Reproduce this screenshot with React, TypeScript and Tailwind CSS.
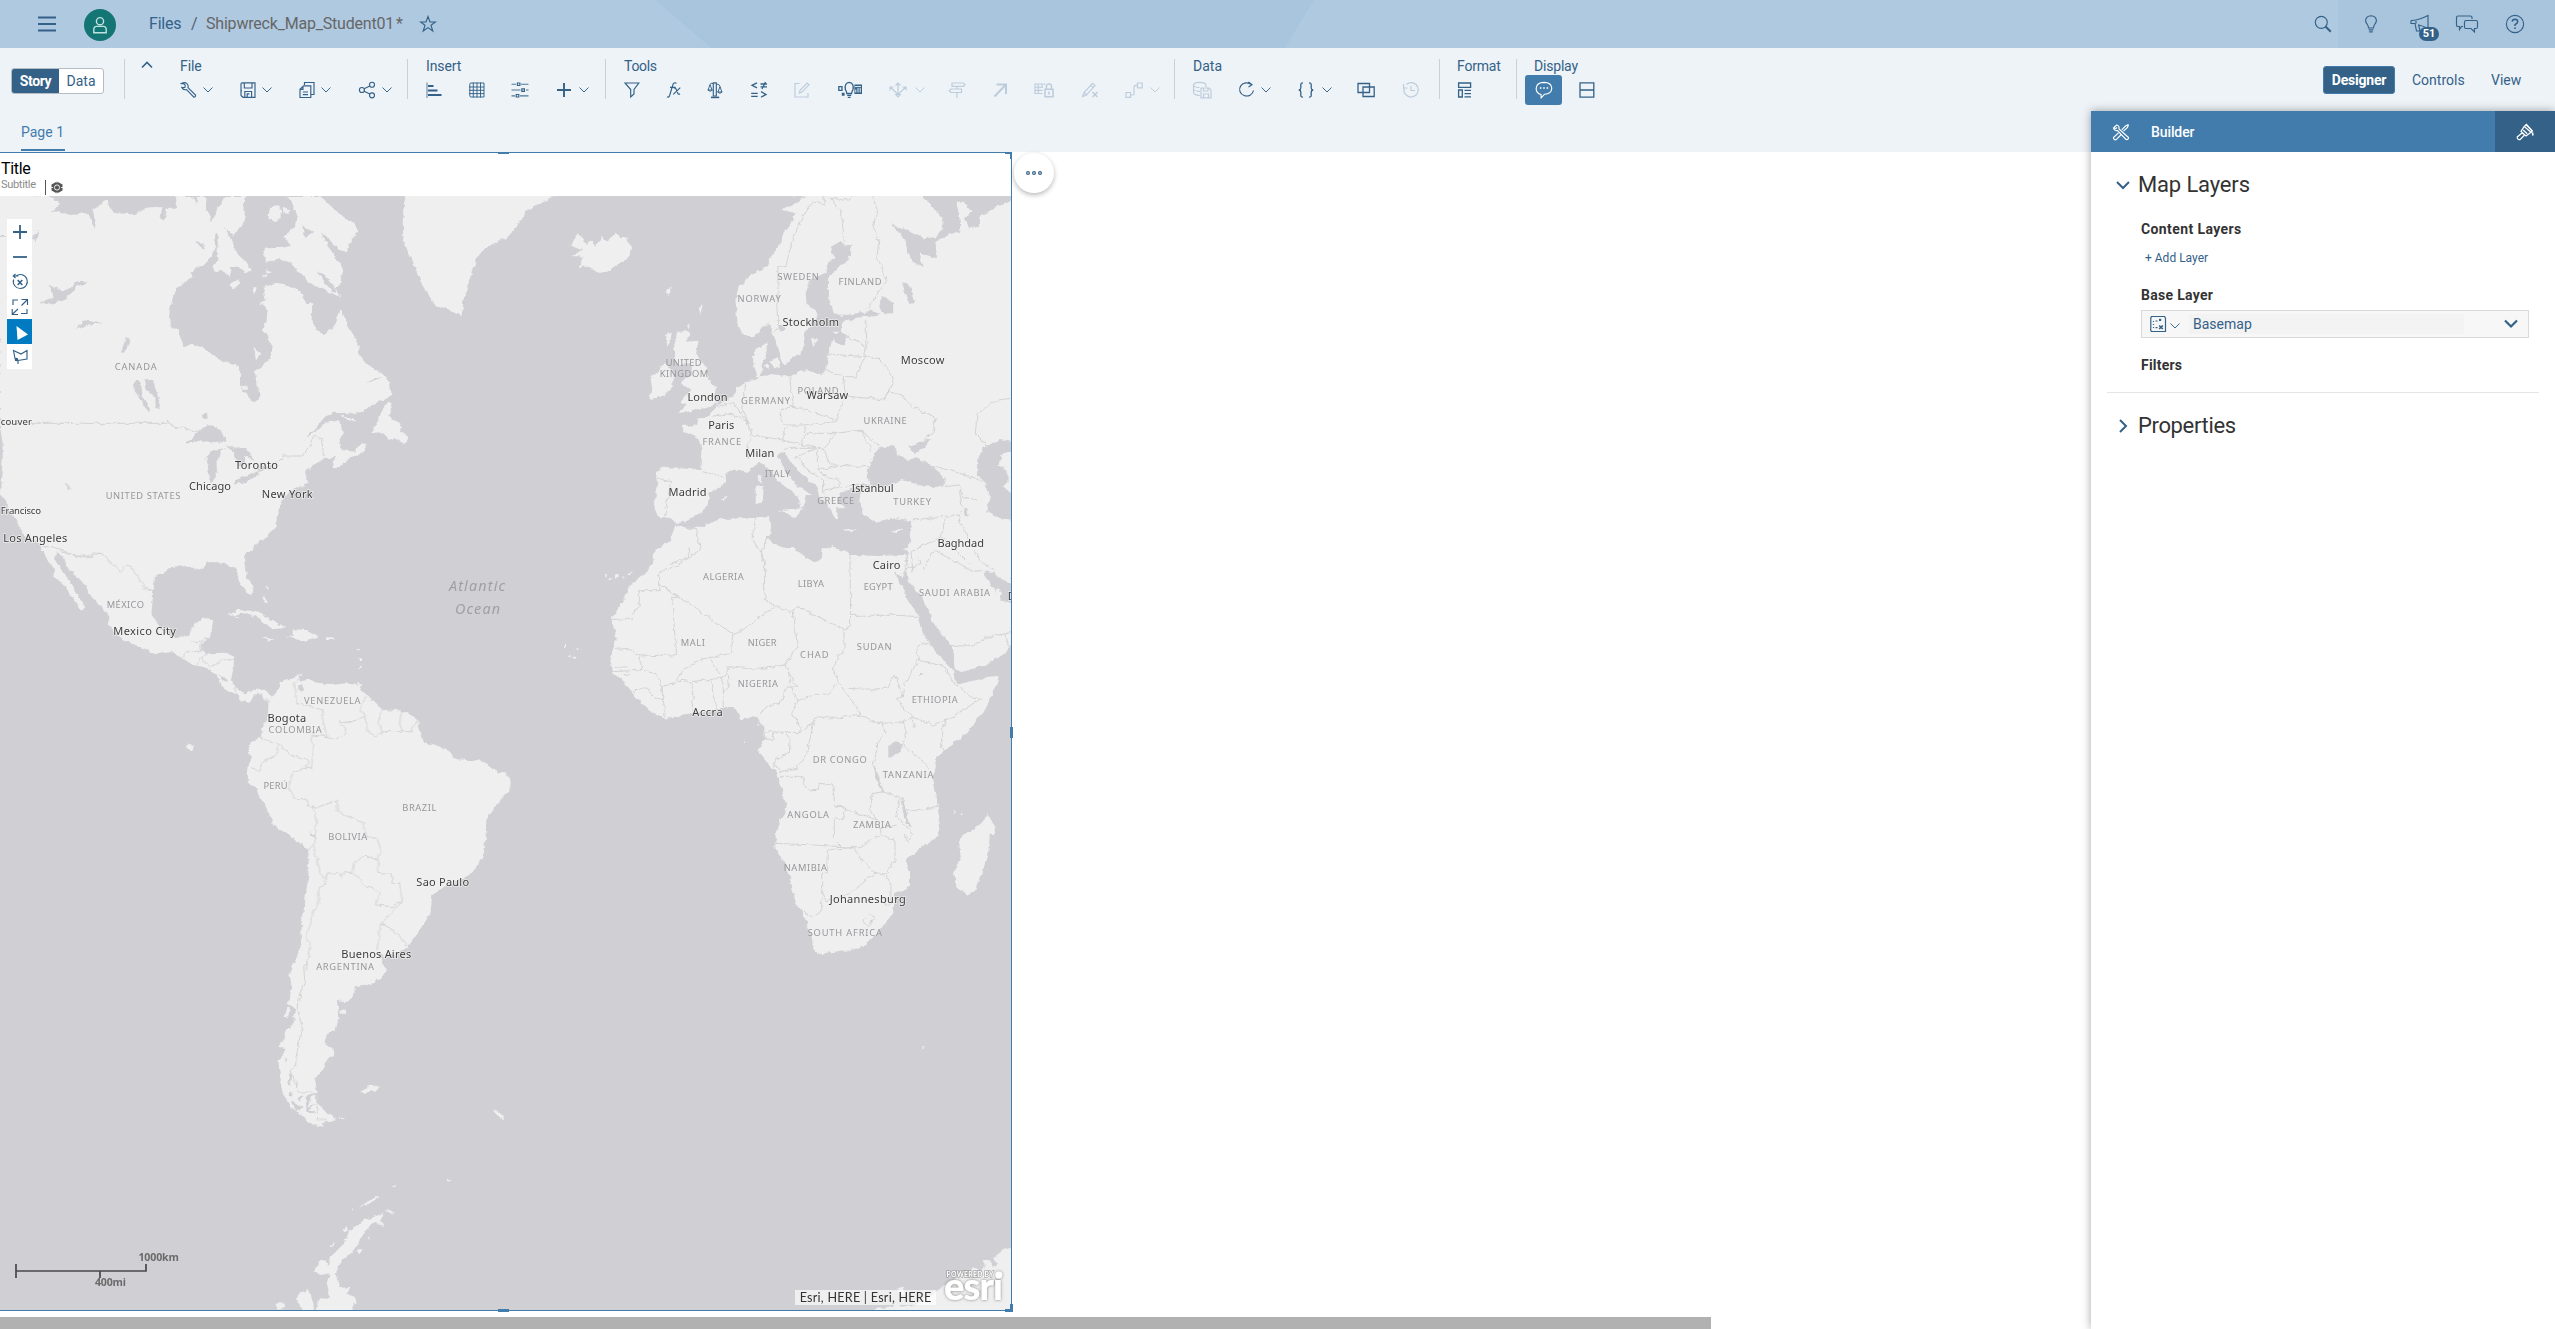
import React from "react";

type IconProps = { children: React.ReactNode; w?: number; h?: number; sw?: number; className?: string };

const Ic = ({ children, w = 18, h = 18, sw = 1.15, className = "" }: IconProps) => (
  <svg
    width={w}
    height={h}
    viewBox={`0 0 ${w} ${h}`}
    fill="none"
    stroke="currentColor"
    strokeWidth={sw}
    className={`shrink-0 ${className}`}
  >
    {children}
  </svg>
);

const Chev = ({ className = "" }: { className?: string }) => (
  <Ic w={10} h={18} sw={0.95} className={className}>
    <path d="M0.5 6.5 L5 11 L9.5 6.5" />
  </Ic>
);

const Sep = ({ className = "" }: { className?: string }) => (
  <div className={`mt-[11px] h-10 w-px shrink-0 bg-[#c9d0d7] ${className}`} />
);

const Group = ({ title, className = "", titleClass = "", children }: { title: string; className?: string; titleClass?: string; children: React.ReactNode }) => (
  <div className={`flex shrink-0 flex-col ${className}`}>
    <div className={`mt-[9px] h-[18px] text-sm leading-[19px] ${titleClass}`}>{title}</div>
    <div className="flex h-[30px] items-center">{children}</div>
  </div>
);

/* ---------- map data: one tile per region, each with its own origin and scale ---------- */

type Label = [string, number, number, number];
type Tile = {
  x: number;
  y: number;
  sx: number;
  sy: number;
  land: string[];
  water: string[];
  borders: string[];
  countries: Label[];
  cities: Label[];
};

const T3 = 1 / 3;

const tiles: Tile[] = [
  {
    x: 0, y: 150, sx: T3, sy: T3,
    land: [
      "M-5,130 L150,138 L180,165 L156,182 L200,193 L250,188 L262,192 L285,240 L290,225 L278,180 L300,165 L320,150 L325,175 L350,190 L400,193 L450,172 L488,172 L480,205 L492,215 L500,180 L530,170 L528,138 L580,138 L585,165 L590,138 L620,138 L618,175 L635,213 L648,195 L655,175 L665,150 L680,138 L740,138 L728,160 L738,205 L720,235 L705,250 L700,262 L670,228 L690,262 L700,288 L715,318 L740,340 L752,360 L735,368 L715,350 L690,352 L692,370 L685,382 L665,360 L640,362 L642,345 L655,325 L650,300 L657,262 L648,250 L645,262 L648,290 L635,320 L610,347 L590,350 L575,367 L577,385 L545,400 L525,430 L512,465 L507,500 L510,535 L532,536 L550,588 L590,583 L630,608 L680,640 L720,648 L720,710 L740,735 L762,760 L778,750 L782,735 L770,710 L765,662 L790,650 L812,625 L818,590 L805,560 L785,540 L800,510 L803,475 L780,462 L797,450 L790,410 L830,402 L870,408 L905,430 L915,458 L937,460 L935,510 L950,540 L970,553 L1000,535 L1010,500 L1020,480 L1045,530 L1070,570 L1078,615 L1110,650 L1145,668 L1170,700 L1175,735 L1150,750 L1120,762 L1090,785 L1050,790 L1000,788 L975,800 L950,830 L915,870 L945,845 L975,820 L1010,812 L1025,825 L1030,845 L1015,870 L1025,900 L1060,905 L1085,880 L1102,882 L1090,908 L1050,925 L1020,950 L1000,955 L995,935 L1010,918 L965,930 L920,960 L916,985 L930,1000 L900,1010 L870,1025 L845,1050 L835,1080 L830,1100 L830,1130 L800,1160 L770,1180 L748,1206 L128,1206 L120,1180 L70,1155 L48,1110 L30,1080 L12,1045 L0,1030 L8,930 L8,880 L0,830 Z",
      "M960,138 L1000,175 L1030,200 L1060,220 L1078,240 L1060,265 L1045,285 L1040,310 L1020,300 L1000,285 L980,255 L965,250 L985,290 L1010,325 L1030,360 L1020,400 L1010,412 L1020,445 L990,430 L960,415 L920,390 L890,360 L870,335 L830,330 L795,335 L790,305 L800,292 L862,290 L870,285 L853,262 L885,225 L890,205 L882,170 L862,138 Z",
      "M1165,755 L1178,760 L1165,800 L1205,820 L1200,840 L1225,860 L1215,882 L1180,865 L1170,870 L1150,850 L1112,852 L1135,810 L1150,775 Z",
      "M1022,795 L1070,812 L1050,815 Z",
      "M690,405 L715,388 L725,395 L700,418 Z",
      "M757,412 L770,412 L762,437 Z",
      "M785,372 L800,374 L795,382 Z M800,360 L815,366 L805,372 Z",
      "M810,168 L840,166 L845,200 L825,215 L805,205 Z",
      "M845,175 L870,180 L868,192 L848,190 Z",
      "M722,706 L745,710 L742,720 L728,718 Z",
      "M760,590 L782,610 L768,628 Z",
      "M1215,138 L1208,200 L1210,270 L1240,340 L1255,380 L1280,430 L1310,470 L1345,478 L1385,500 L1392,440 L1410,390 L1435,310 L1470,285 L1520,265 L1550,230 L1575,185 L1575,130 L1220,130 Z",
    ],
    water: [
      "M145,400 L190,425 L235,392 L262,395 L230,410 L195,450 L150,465 L122,455 L165,440 Z",
      "M228,540 L255,508 L305,518 L260,525 Z",
      "M380,560 L388,575 L375,608 L362,612 L372,580 Z",
      "M435,690 L455,690 L468,720 L480,760 L478,782 L468,775 L465,745 L440,720 Z",
      "M405,690 L418,690 L425,735 L450,780 L443,788 L420,750 L400,712 Z",
      "M95,265 L118,240 L110,280 Z M0,258 L20,258 L10,264 L0,264 Z",
      "M553,880 L590,855 L600,838 L625,825 L665,842 L680,875 L640,880 L600,868 L570,880 Z",
      "M620,925 L640,900 L675,895 L650,930 L650,985 L632,1000 L625,960 Z",
      "M680,890 L740,895 L762,930 L735,918 L735,945 L715,950 L702,905 Z",
      "M702,992 L730,980 L775,962 L775,975 L740,995 L708,1003 Z",
      "M770,955 L815,945 L820,955 L775,962 Z",
      "M605,792 L618,788 L620,806 L608,808 Z",
      "M195,1000 L200,1000 L212,1018 L205,1018 Z",
      "M582,272 L610,280 L618,295 L600,292 Z M905,225 L925,240 L940,245 L915,265 Z",
      "M948,360 L975,375 L1010,420 L1005,430 L975,400 Z",
      "M1098,700 L1120,685 L1145,682 L1110,695 Z",
      "M1030,875 L1060,890 L1068,880 L1060,897 L1035,892 Z",
    ],
    borders: [
      "M0,820 L500,820 L502,810 L510,825 L550,835 L580,845 L610,842",
      "M680,885 L720,895 M760,960 L820,945 L850,918 L905,918 L925,895 L940,860 L965,865 L970,915 L978,920",
      "M130,1190 L165,1190 L230,1218 L278,1218 L280,1210 L308,1210",
    ],
    countries: [["CANADA", 344, 470, 660], ["UNITED STATES", 317, 541, 1047]],
    cities: [["couver", 2, 96, 826], ["Toronto", 705, 834, 957], ["Chicago", 567, 693, 1020], ["New York", 785, 938, 1044], ["Francisco", 2, 123, 1092], ["Los Angeles", 10, 202, 1176]],
  },
  {
    x: 520, y: 150, sx: 1 / 2.8, sy: T3,
    land: [
      "M-5,130 H115 L75,150 L20,180 L-5,195 Z",
      "M755,138 L800,140 L735,180 L768,190 L765,210 L745,240 L730,280 L710,310 L690,350 L650,375 L612,412 L603,450 L610,530 L630,558 L655,558 L695,520 L712,560 L722,600 L738,642 L755,640 L758,622 L785,615 L795,575 L800,540 L828,505 L835,492 L815,470 L802,460 L800,430 L812,392 L858,368 L865,330 L880,325 L870,290 L895,276 L930,290 L920,330 L905,340 L885,362 L865,378 L865,440 L875,485 L900,497 L985,482 L1010,492 L975,498 L935,505 L902,520 L898,545 L915,562 L912,590 L888,580 L878,568 L862,600 L860,650 L845,672 L800,660 L750,680 L705,672 L680,682 L665,680 L656,650 L655,600 L672,595 L692,575 L690,608 L680,640 L678,668 L660,690 L640,693 L605,712 L598,740 L550,768 L525,800 L500,805 L495,825 L452,828 L460,845 L500,865 L508,900 L505,960 L400,950 L380,968 L385,1010 L375,1065 L385,1100 L425,1105 L440,1120 L500,1095 L525,1070 L530,1030 L578,998 L575,968 L600,958 L635,968 L670,935 L700,960 L730,1000 L780,1040 L785,1075 L795,1060 L800,1035 L820,1035 L780,1010 L745,970 L722,915 L740,905 L765,950 L830,1010 L840,1045 L865,1070 L885,1112 L895,1100 L880,1075 L912,1075 L890,1050 L892,1030 L935,1015 L965,1000 L985,1008 L955,1020 L950,1050 L960,1095 L1000,1118 L1050,1105 L1095,1110 L1095,1150 L1085,1215 L1080,1265 L1380,1265 L1380,130 L755,130 Z",
      "M440,545 L478,542 L468,575 L497,572 L490,610 L520,650 L530,690 L552,715 L545,750 L556,762 L500,780 L440,790 L465,765 L450,755 L478,720 L450,700 L478,675 L478,640 L440,645 L430,600 L435,570 Z",
      "M400,640 L430,660 L430,710 L400,740 L362,748 L370,720 L365,680 L385,668 Z",
      "M408,560 L425,545 L420,575 L412,590 Z M410,415 L425,412 L415,440 Z M500,478 L514,465 L505,490 Z M470,525 L480,520 L475,535 Z",
      "M140,285 L165,250 L185,285 L200,270 L210,290 L230,262 L245,272 L270,247 L285,265 L298,260 L312,300 L290,335 L230,372 L195,350 L165,350 L180,320 L145,318 L175,300 Z",
      "M700,632 L722,622 L728,650 L712,655 Z M685,645 L698,645 L695,660 Z",
      "M815,565 L832,565 L822,595 Z M875,545 L895,545 L885,556 Z",
      "M665,975 L676,975 L674,1000 L668,1000 Z M660,1010 L682,1008 L680,1055 L660,1060 Z",
      "M725,1080 L792,1075 L770,1105 Z",
      "M900,1134 L945,1138 L925,1143 Z M1042,1145 L1072,1132 L1055,1150 Z",
      "M565,1045 L582,1040 L575,1050 Z",
      "M435,1125 L480,1140 L560,1108 L650,1103 L697,1098 L702,1145 L690,1160 L715,1185 L780,1205 L820,1238 L845,1230 L848,1200 L870,1190 L930,1215 L1000,1218 L1080,1215 L1082,1265 L368,1265 L372,1215 L420,1170 Z",
    ],
    water: [
      "M1115,130 L1380,130 L1375,150 L1345,165 L1285,200 L1285,230 L1260,235 L1243,205 L1265,185 L1245,155 L1220,155 L1230,195 L1233,245 L1205,250 L1190,265 L1160,275 L1168,325 L1118,310 L1130,350 L1110,345 L1085,310 L1080,275 L1040,220 L1080,240 L1130,265 L1165,262 L1185,235 L1180,200 L1150,165 Z",
      "M1010,890 L1040,885 L1060,915 L1085,930 L1110,922 L1160,950 L1190,985 L1185,1010 L1140,1010 L1070,990 L1020,1012 L985,1005 L970,985 L980,935 Z",
      "M1085,888 L1150,866 L1125,900 L1105,912 Z",
      "M1280,930 L1300,890 L1340,870 L1380,875 L1380,905 L1345,915 L1340,950 L1365,960 L1365,1000 L1350,1010 L1380,1030 L1380,1110 L1345,1105 L1305,1085 L1315,1040 L1300,1000 L1280,970 Z",
      "M1015,435 L1045,460 L1045,490 L1020,495 L1005,465 Z",
      "M1070,395 L1095,410 L1105,455 L1090,460 L1078,430 Z",
      "M722,520 L745,535 L728,545 Z",
      "M1244,1075 L1252,1078 L1256,1098 L1248,1098 Z",
    ],
    borders: [
      "M790,205 L765,260 L745,345 L722,350 L722,470 L725,530 L712,545",
      "M790,205 L820,155 L855,165 L850,138 M870,145 L900,190 L908,275 M870,145 L920,150 L935,138",
      "M985,138 L1000,175 L990,230 L1005,270 L1000,320 L1012,350 L1028,390 L975,475",
      "M968,512 L972,590 M880,568 L915,560 L970,590 L965,620 L862,612 M965,620 L940,680 L905,680 M850,655 L890,675 L905,680 L912,738 L1020,750 L1030,725 L1070,735 L1090,765 L1165,805 L1155,850 L1130,870 M965,620 L1000,625 L1035,660 L1045,700 L1020,750",
      "M755,680 L765,765 L725,790 L740,825 L795,825 L885,815 L912,738 M755,765 L885,810",
      "M635,700 L620,760 L630,800 L650,855 M555,768 L600,760 L625,800 L640,820 M535,800 L590,790 L645,820",
      "M650,855 L635,885 L640,930 M650,855 L735,870 L745,835 M735,870 L790,885 L800,830 M790,885 L850,898 L885,850 L800,850",
      "M885,850 L955,840 L1005,890 M955,840 L985,905 M850,898 L870,945 L980,950 M740,895 L830,895 L835,960 L890,950 M830,895 L775,920 L810,965 L850,990 L850,1020 L960,1000 M835,960 L860,980 L890,985 L895,1010 M850,1020 L855,1055",
      "M505,960 L570,980 M385,985 L422,995 L405,1098 M435,1125 L495,1140 L505,1200 L470,1225 L420,1240 M660,1105 L650,1165 L675,1210 L688,1265 M700,1150 L675,1205",
      "M1375,745 L1340,750 L1280,790 L1275,850 L1308,885 M1165,950 L1280,985 L1300,1000 M1190,1010 L1230,1005 L1240,1040 L1280,1050 M1230,1020 L1240,1080 L1225,1095 L1100,1110 M1225,1095 L1260,1180 L1290,1235 L1330,1260 M1190,1105 L1180,1160 L1095,1205 M1180,1160 L1260,1245 M1095,1205 L1100,1265",
    ],
    countries: [["SWEDEN", 721, 837, 389], ["FINLAND", 892, 1012, 404], ["NORWAY", 609, 730, 455], ["UNITED", 408, 508, 648], ["KINGDOM", 391, 527, 681], ["GERMANY", 619, 756, 762], ["POLAND", 777, 892, 731], ["UKRAINE", 962, 1083, 822], ["FRANCE", 511, 619, 885], ["ITALY", 685, 757, 981], ["GREECE", 832, 936, 1062], ["TURKEY", 1045, 1151, 1065]],
    cities: [["Stockholm", 735, 893, 528], ["Moscow", 1066, 1188, 642], ["London", 469, 581, 753], ["Warsaw", 802, 919, 748], ["Paris", 527, 600, 837], ["Milan", 631, 712, 921], ["Madrid", 416, 522, 1038], ["Istanbul", 928, 1046, 1026], ["Baghdad", 1169, 1299, 1191]],
  },
  {
    x: 0, y: 550, sx: 1 / 2.9037, sy: T3,
    land: [
      "M122,-6 L140,35 L160,55 L155,80 L190,110 L210,145 L238,182 L247,172 L220,130 L205,95 L175,55 L160,30 L162,10 L185,20 L200,60 L250,105 L260,135 L300,175 L318,205 L316,230 L350,262 L400,292 L460,312 L500,305 L530,325 L560,345 L610,355 L640,395 L645,412 L690,435 L700,452 L725,458 L735,440 L745,430 L760,430 L765,445 L778,455 L790,440 L770,420 L745,418 L710,432 L685,410 L670,390 L678,355 L680,320 L655,308 L600,310 L580,300 L600,262 L610,262 L620,208 L595,205 L565,220 L550,258 L500,262 L465,235 L440,190 L445,120 L450,85 L490,55 L540,48 L585,60 L600,35 L650,38 L660,48 L685,55 L695,95 L720,135 L730,135 L733,110 L712,60 L708,20 L728,-6 Z",
      "M758,562 L728,575 L720,605 L735,625 L715,655 L718,690 L740,710 L765,760 L800,830 L860,870 L895,900 L897,960 L885,1060 L872,1140 L875,1180 L846,1266 L1118,1266 L1105,1240 L1095,1208 L1115,1218 L1150,1215 L1178,1195 L1215,1145 L1250,1090 L1255,1035 L1290,1010 L1370,970 L1400,925 L1410,870 L1412,810 L1440,765 L1480,720 L1478,680 L1465,670 L1445,668 L1400,632 L1360,630 L1320,628 L1310,605 L1230,575 L1212,510 L1175,485 L1110,480 L1065,435 L1050,425 L1045,408 L1010,400 L960,405 L925,402 L900,388 L870,395 L868,382 L880,370 L850,382 L812,400 L805,425 L780,450 L778,495 L760,540 Z",
      "M660,195 L690,180 L740,182 L780,205 L830,232 L785,235 L750,205 L720,190 Z",
      "M828,262 L850,258 L850,238 L890,240 L925,258 L900,268 L875,275 L865,265 Z",
      "M762,262 L797,268 L780,273 Z M948,262 H971 V270 H948 Z",
      "M762,140 L768,140 L775,160 L768,158 Z M770,110 L780,112 L778,120 Z M1036,298 h6 v6 h-6 Z M1042,322 h6 v8 h-6 Z M1045,348 h5 v6 h-5 Z M1040,400 h8 v8 h-8 Z",
      "M540,590 L550,580 L562,594 L550,602 Z M684,198 h8 v6 h-8 Z",
    ],
    water: [
      "M866,402 L876,402 L884,418 L876,428 L866,420 Z",
      "M636,372 L655,385 L660,398 L645,388 Z",
      "M900,846 L915,855 L917,864 L905,858 Z",
    ],
    borders: [
      "M170,0 L225,20 L268,20 L270,10 L295,10 L325,40 L350,65 L365,48 L385,55 L420,115 L450,123",
      "M553,275 L583,273 L583,305 L565,308 L538,305 L532,325 M583,273 L600,262 M583,325 L605,310 M583,325 L570,342 M583,325 L610,350 L650,330 L678,325 M685,410 L688,437",
      "M868,385 L855,400 L862,455 L885,465 L940,480 L935,500 L950,560 L970,570 L1008,550 L985,515 L1030,515 L1058,498 L1045,475 L1062,440 M1058,498 L1070,550 L1090,560 L1110,545 L1098,520 L1110,480 M1110,545 L1195,545 L1212,510 M1165,487 L1160,520 L1170,545",
      "M950,560 L905,555 L910,600 L905,655 L880,655 L850,670 L838,710 L855,745 L890,748 M755,562 L810,583 L850,618 L895,628 L890,655 M810,583 L800,615 L760,640 L750,665 L730,655",
      "M890,748 L892,768 L925,772 L978,750 L980,785 L1055,820 L1062,860 L1095,865 L1105,900 L1098,930 L1060,918 L1030,935 L1025,968 L1000,965 L993,982 L985,968 L950,970 L945,982 L935,980 L920,930 L910,885 L918,845 L918,790 L905,770",
      "M910,885 L895,900 M945,982 L945,1005 L925,1015 L925,1060 L905,1090 L900,1130 L890,1160 L902,1190 L890,1260",
      "M1025,968 L1060,1005 L1105,1030 L1090,1065 L1140,1070 L1168,1055 L1160,1000 L1140,1000 L1135,970 L1100,968 L1098,930 M1168,1055 L1105,1122 L1095,1200 M1105,1122 L1135,1135 L1178,1175 L1178,1190",
      "M770,445 L785,455",
    ],
    countries: [["MÉXICO", 310, 418, 173], ["VENEZUELA", 883, 1047, 462], ["COLOMBIA", 780, 934, 549], ["PERÚ", 765, 835, 717], ["BRAZIL", 1168, 1267, 783], ["BOLIVIA", 953, 1066, 870], ["ARGENTINA", 918, 1086, 1259]],
    cities: [["Mexico City", 329, 511, 255], ["Bogota", 777, 889, 516], ["Sao Paulo", 1209, 1362, 1008], ["Buenos Aires", 991, 1194, 1224]],
  },
  {
    x: 540, y: 550, sx: T3, sy: T3,
    land: [
      "M348,-6 L340,40 L310,75 L270,105 L250,155 L213,205 L230,265 L210,325 L220,370 L260,405 L285,440 L320,475 L375,507 L440,492 L500,485 L550,473 L585,475 L605,508 L650,500 L670,530 L672,570 L655,600 L680,635 L710,665 L720,700 L740,770 L718,815 L707,850 L706,895 L735,940 L752,990 L765,1050 L790,1095 L815,1160 L820,1200 L845,1215 L930,1200 L970,1190 L1020,1140 L1060,1090 L1065,1030 L1110,1010 L1110,965 L1098,930 L1140,895 L1190,865 L1200,830 L1190,740 L1178,680 L1190,620 L1215,600 L1290,540 L1340,470 L1378,380 L1330,385 L1260,402 L1243,390 L1240,360 L1190,310 L1165,275 L1145,245 L1135,200 L1105,150 L1070,80 L1065,60 L1085,88 L1095,50 L1092,25 L1070,25 L1000,20 L936,15 L900,-2 L848,-6 L845,25 L828,40 L790,17 L768,12 L765,-6 Z",
      "M1092,-6 L1105,10 L1098,50 L1102,85 L1140,135 L1165,175 L1175,215 L1215,265 L1235,290 L1240,320 L1245,360 L1265,366 L1340,345 L1395,310 L1416,290 L1416,160 L1380,150 L1365,120 L1335,75 L1325,40 L1350,42 L1375,80 L1416,103 L1416,-6 Z",
      "M1368,118 L1380,120 L1385,150 L1375,155 Z",
      "M1345,790 L1362,820 L1365,855 L1352,850 L1350,890 L1310,1018 L1280,1035 L1250,1010 L1242,970 L1262,920 L1256,865 L1300,840 L1325,815 Z",
      "M195,72 h5 v8 h-5 Z M208,82 h6 v5 h-6 Z M222,76 L235,68 L236,80 L226,90 Z M250,80 h6 v5 h-6 Z M262,74 L275,62 L270,76 Z",
      "M72,285 h6 v5 h-6 Z M85,318 h6 v6 h-6 Z M98,318 h8 v6 h-8 Z M110,295 h5 v5 h-5 Z",
      "M650,518 L658,520 L654,528 Z M614,574 h4 v5 h-4 Z M1243,780 h4 v8 h-4 Z M1262,790 h5 v5 h-5 Z",
    ],
    water: [
      "M1045,592 L1060,576 L1086,580 L1082,605 L1060,618 L1045,622 Z",
      "M1000,640 L1008,650 L1015,690 L1032,722 L1026,728 L1008,690 Z",
      "M1082,745 L1090,750 L1100,790 L1112,830 L1106,835 L1092,800 Z",
      "M1137,372 h8 v6 h-8 Z",
    ],
    borders: [
      "M215,208 H280 V180 L298,170 V122 H356 V70 L385,58 L445,25 L450,-5 M356,100 L460,170 L525,215 L560,240 L578,250 L605,242 L705,168 L675,148 L672,30 L662,0 M395,142 H415 L356,100 M395,142 L410,314 L300,318 L305,360 L220,365 M300,318 L265,295 L225,298",
      "M705,168 L750,185 L780,172 L912,240 L932,230 L930,10 M932,196 H1075 L1135,200 M912,240 V310 L895,312 L880,360 L895,395 L870,430 L800,440 L770,455 L750,400 L745,360 L735,345 L772,290 L760,185",
      "M578,250 L575,310 L480,328 L430,360 L410,390 L455,395 L540,385 L560,375 L565,350 L650,358 L735,345 M510,325 L540,370 M455,395 L460,440 L455,485 M515,392 L530,475 M545,385 L550,470 M565,375 L568,410 L550,425 M365,410 L410,400 M365,410 L372,465 L375,500 M305,360 L350,372 L365,410 L370,450 L340,440 L320,415 L300,412 L280,430 M225,352 L265,350 M250,375 L270,370",
      "M745,360 L755,385 L770,410 L740,412 L720,460 L690,465 L655,495 M770,455 L755,490 L780,530 L780,548 L672,545 M700,548 V565 H672 M735,545 L750,570 L748,610 L710,625 L700,645 L720,660 M780,548 L820,520 L830,500 L880,505 L965,495 L915,425 L895,395 M820,520 L800,610 L770,655 L720,665",
      "M965,495 L1000,515 L1030,520 L1035,550 L1015,570 L1010,605 L1000,640 L1020,700 L1030,725 L1000,730 L990,775 L1010,810 L915,775 L885,770 L878,705 L838,700 L835,718 L800,720 L788,682 L720,682",
      "M925,415 L975,418 L1040,415 L1060,375 L1075,400 L1090,440 L1070,445 L1085,470 L1115,500 L1090,515 L1030,520 M1090,515 L1100,550 L1088,585 L1170,655 M1115,500 L1180,525 L1220,510 L1240,498 L1325,445 L1290,440 L1235,390 L1215,350 L1135,330 L1095,400 L1090,440 M1135,330 L1130,290 L1165,275 M1220,510 L1205,535 V590 L1215,605 M1115,500 L1125,535",
      "M1030,725 L1080,745 L1070,800 L1095,830 M1095,780 L1150,778 L1195,768 M885,770 L915,770 L912,805 L880,805 V865 L905,890 L960,890 L1025,855 L1065,870 L1065,930 L1035,975 L1005,970 L965,930 L940,892 L862,900 L860,965 L845,968 V1085 L815,1100 L790,1085 M706,880 L820,885 L905,890 M1025,855 L1020,835 L1070,825 M845,1020 L860,1055 L930,1030 L1005,970 M1040,975 L1050,1000 V1045 M1095,830 L1115,850 L1105,880 L1092,850",
      "M990,1090 L1005,1105 L985,1130 L968,1110 Z M1032,1045 h18 v20 h-14 Z",
      "M1150,60 L1175,10 L1190,5 L1290,60 L1325,65 M1095,60 L1140,40 L1135,20 M1235,290 L1300,285 L1340,262 L1395,252 L1416,245 M1395,252 L1410,295 M1100,5 L1098,50 L1090,80",
    ],
    countries: [["ALGERIA", 489, 611, 89], ["LIBYA", 773, 852, 111], ["EGYPT", 971, 1058, 119], ["SAUDI ARABIA", 1137, 1350, 138], ["MALI", 422, 495, 287], ["NIGER", 623, 710, 287], ["SUDAN", 950, 1055, 299], ["CHAD", 780, 866, 323], ["NIGERIA", 593, 714, 410], ["ETHIOPIA", 1115, 1253, 458], ["DR CONGO", 818, 980, 638], ["TANZANIA", 1028, 1180, 683], ["ANGOLA", 742, 867, 803], ["ZAMBIA", 939, 1052, 834], ["NAMIBIA", 731, 861, 962], ["SOUTH AFRICA", 803, 1026, 1157]],
    cities: [["Cairo", 998, 1081, 57], ["Accra", 457, 548, 498], ["Johannesburg", 869, 1097, 1060], ["D", 1403, 1427, 150]],
  },
  {
    x: 0, y: 960, sx: 1 / 2.9037, sy: T3,
    land: [
      "M860,-6 L840,40 L848,80 L835,130 L850,140 L860,150 L845,200 L832,205 L822,240 L808,260 L830,265 L822,285 L808,300 L815,365 L820,400 L850,445 L880,470 L910,495 L940,500 L935,488 L978,478 L945,455 L922,430 L920,395 L915,355 L940,330 L942,312 L970,285 L965,265 L940,245 L955,220 L975,210 L985,165 L978,120 L1010,125 L1028,105 L1030,78 L1080,72 L1110,50 L1122,25 L1106,-6 Z",
      "M832,142 L842,140 L836,175 L830,170 Z M985,150 h10 l10,4 l-4,8 l-12,-2 Z M985,474 h15 v3 h-15 Z",
      "M1045,392 L1075,377 L1103,380 L1090,395 L1075,390 L1060,402 Z",
      "M1430,450 L1445,455 L1463,475 L1457,476 L1440,462 Z",
      "M1040,740 L1060,730 L1090,708 L1103,710 L1070,732 Z M1120,750 L1146,757 L1135,766 Z M1140,676 h12 v4 h-12 Z M1295,660 h14 v4 h-14 Z M1022,745 h4 v6 h-4 Z",
      "M920,1056 L925,1020 L955,1010 L948,975 L958,940 L930,945 L915,935 L930,895 L945,900 L955,925 L960,890 L1000,850 L1015,810 L1060,780 L1115,758 L1105,780 L1115,800 L1090,785 L1060,810 L1040,850 L1020,880 L995,895 L975,940 L985,985 L1015,980 L1005,1000 L1030,1010 L1022,1056 Z",
      "M995,810 L1010,795 L1012,812 L1000,816 Z M960,860 L970,845 L965,862 Z M1035,868 L1053,868 L1045,882 Z M1068,830 h5 v6 h-5 Z",
      "M855,1020 L870,1000 L895,990 L910,1030 L912,1056 L885,1056 L870,1030 Z M800,1032 L822,1026 L825,1044 L805,1046 Z M1022,1008 L1034,1020 L1030,1036 Z",
    ],
    water: [
      "M848,142 L856,145 L848,200 L840,205 Z",
      "M860,415 L882,405 L870,425 Z M888,410 L920,398 L922,404 L905,412 L892,440 L915,430 L900,445 L915,462 L890,455 Z M840,340 L846,345 L842,380 L836,370 Z M845,420 L880,445 L860,450 Z",
      "M825,290 L832,292 L828,310 Z M838,400 L850,398 L846,415 Z",
    ],
    borders: ["M892,-5 V15 L882,20 L885,65 L870,100 L865,150 L878,205 L870,235 L860,290 L858,320 L845,330 L850,360 L862,362 L865,395 L918,398 L922,478 L950,478"],
    countries: [],
    cities: [],
  },
  {
    x: 540, y: 960, sx: T3, sy: T3,
    land: [
      "M970,1056 L1040,1042 L1075,1035 L1110,1040 L1185,1000 L1210,975 L1260,950 L1290,935 L1300,920 L1318,935 L1335,925 L1330,900 L1345,900 L1360,918 L1372,912 L1362,900 L1370,882 L1395,865 L1418,860 L1418,1056 Z",
      "M1072,985 L1088,980 L1092,1000 L1075,1000 Z M1144,258 h8 v5 h-8 Z",
    ],
    water: [],
    borders: [],
    countries: [],
    cities: [],
  },
];

const WorldMap = () => {
  const tf = (t: Tile) => `translate(${t.x} ${t.y}) scale(${t.sx} ${t.sy})`;
  return (
    <svg width="1011" height="1114" viewBox="0 196 1011 1114" className="block bg-[#d0cfd4]">
      <defs>
        <filter id="coast" x="-10" y="186" width="1040" height="1140" filterUnits="userSpaceOnUse" colorInterpolationFilters="sRGB">
          <feTurbulence type="fractalNoise" baseFrequency="0.16" numOctaves="3" seed="4" result="n" />
          <feDisplacementMap in="SourceGraphic" in2="n" scale="5" xChannelSelector="R" yChannelSelector="G" />
        </filter>
        <filter id="halo" x="-20%" y="-20%" width="140%" height="150%">
          <feDropShadow dx="0" dy="0" stdDeviation="1.8" floodColor="#555" floodOpacity="0.75" />
        </filter>
      </defs>
      <g filter="url(#coast)">
        {tiles.map((t, i) => (
          <g key={i} transform={tf(t)} fill="#efefef">
            {t.land.map((d, k) => <path key={k} d={d} />)}
          </g>
        ))}
        {tiles.map((t, i) => (
          <g key={i} transform={tf(t)} fill="#d0cfd4">
            {t.water.map((d, k) => <path key={k} d={d} />)}
          </g>
        ))}
        {tiles.map((t, i) => (
          <g key={i} transform={tf(t)} fill="none" stroke="#d3d3d4" strokeWidth="1">
            {t.borders.map((d, k) => <path key={k} d={d} vectorEffect="non-scaling-stroke" />)}
          </g>
        ))}
      </g>
      <g fontFamily="'Noto Sans', sans-serif">
        {tiles.flatMap((t) =>
          t.countries.map(([s, a, b, y]) => (
            <text key={s} x={t.x + a * t.sx} y={t.y + y * t.sy} fontSize="9.3" fill="#97979b" textLength={(b - a) * t.sx}>{s}</text>
          ))
        )}
        {tiles.flatMap((t) =>
          t.cities.map(([s, a, b, y]) => (
            <text
              key={s}
              x={t.x + a * t.sx}
              y={t.y + y * t.sy}
              fontSize={s === "couver" || s === "Francisco" ? 9.6 : 11}
              fill="#3c3c3c"
              stroke="#f4f4f4"
              strokeWidth="1.4"
              strokeOpacity="0.8"
              paintOrder="stroke"
              textLength={(b - a) * t.sx}
            >
              {s}
            </text>
          ))
        )}
        <g fontStyle="italic" fontSize="14.4" fill="#9fa0a5">
          <text x="449" y="591" textLength="56">Atlantic</text>
          <text x="455" y="614" textLength="45">Ocean</text>
        </g>
      </g>
      <path d="M16 1264 V1278 M16 1271 H146 V1264 M100 1271 V1278" fill="none" stroke="#484848" strokeWidth="1.7" />
      <g fontFamily="'Open Sans', sans-serif" fontWeight="700" fontSize="10.6" fill="#6a6a6a">
        <text x="138.4" y="1261" textLength="40.5">1000km</text>
        <text x="95" y="1286" textLength="31">400mi</text>
      </g>
      <rect x="795" y="1290" width="141" height="15" fill="#fff" fillOpacity="0.66" />
      <text x="799.7" y="1302" fontFamily="Lato, sans-serif" fontSize="12.6" fill="#333" textLength="131.5">Esri, HERE | Esri, HERE</text>
      <g filter="url(#halo)" fill="#fff">
        <text x="944" y="1300" fontFamily="Lato, sans-serif" fontWeight="900" fontSize="38" textLength="59">esrı</text>
        <circle cx="998.8" cy="1275" r="3.4" />
      </g>
      <text x="946.5" y="1277" fontFamily="Lato, sans-serif" fontWeight="700" fontSize="6.8" fill="#fff" stroke="#8c8c8f" strokeWidth="1.4" strokeOpacity="0.7" paintOrder="stroke" textLength="47">POWERED BY</text>
    </svg>
  );
};

const MapTools = () => (
  <div className="absolute top-[66px] left-[7px] flex w-[25px] flex-col bg-white text-[#346187]">
    <div className="grid h-[25px] place-items-center"><Ic sw={1.8}><path d="M2 9 H16 M9 2 V16" /></Ic></div>
    <div className="grid h-[25px] place-items-center"><Ic sw={1.8}><path d="M2 9 H16" /></Ic></div>
    <div className="grid h-[25px] place-items-center">
      <Ic><path d="M5 3 A7 7 0 1 1 2.6 6.5 M2.5 3 H7.5 M4.5 1 L2.3 3 L4.5 5" /><path d="M6.7 7 L11.3 12 M11.3 7 L6.7 12" strokeWidth="1.6" /></Ic>
    </div>
    <div className="grid h-[25px] place-items-center">
      <Ic><path d="M2 7 V2 H7 M16 11 V15.5 H10 M10.5 1.5 H16.5 V7 M16 2 L10.5 7.5 M1.2 11 V16.5 H7 M1.6 16 L7 11" /></Ic>
    </div>
    <div className="grid h-[25px] place-items-center bg-[#007ac0] text-white">
      <Ic><path d="M5.5 3 L17 11.5 L6.5 17 Z" fill="currentColor" stroke="none" /></Ic>
    </div>
    <div className="grid h-[25px] place-items-center">
      <Ic><path d="M2.5 2.5 L10 6 L16 2.5 V11 L7 12.5 L4 10.5 Z M4 12.5 H9 M7 12 V16" /><circle cx="5.5" cy="11.5" r="1.2" /></Ic>
    </div>
  </div>
);

const Header = () => (
  <header className="relative flex h-12 items-center bg-[#a9c5de] text-[#346187]">
    <svg width="2555" height="48" className="absolute inset-0">
      <path d="M0 0 H655 L711 48 H0 Z M1314 0 H2338 V48 H1285 Z" fill="#afc9e1" />
    </svg>
    <div className="relative flex w-full items-center">
      <Ic w={18} sw={2} className="ml-[38px]"><path d="M0 2.5 H18 M0 9 H18 M0 15.5 H18" /></Ic>
      <div className="mt-0.5 ml-7 grid size-8 place-items-center rounded-full bg-[#147575] text-[#bfe3df]">
        <Ic sw={1.4}><circle cx="9" cy="5.2" r="3.6" /><path d="M2.8 16.8 V13 Q3 10.6 5.5 10.4 H12.5 Q15 10.6 15.2 13 V16.8 Z" /></Ic>
      </div>
      <div className="ml-[33px] flex w-[260px] text-base leading-6 tracking-[-0.2px]">
        <span className="w-[42px]">Files</span>
        <span className="w-[15px] text-[#51606e]">/</span>
        <span className="text-[#666]">Shipwreck_Map_Student01</span>
        <span className="pl-0.5 text-[#666]">*</span>
      </div>
      <Ic w={18} className="ml-[10px]"><path d="M9 1.5 L11 7 H16.5 L12 10.3 L13.8 16 L9 12.6 L4.2 16 L6 10.3 L1.5 7 H7 Z" /></Ic>
      <div className="ml-auto flex items-center pr-[30px]">
        <Ic><circle cx="7.3" cy="7.3" r="6" /><path d="M11.5 11.5 L16.8 16.8" strokeWidth="2" /></Ic>
        <Ic className="ml-[30px]"><path d="M6.5 13 Q6.5 11 5 9 Q3.6 7.4 3.6 5.6 Q4 1 9 0.8 Q14 1 14.4 5.6 Q14.4 7.4 13 9 Q11.5 11 11.5 13 Z M6.7 14.8 H11.3 M7.2 16.8 H10.8" /></Ic>
        <div className="relative ml-[30px] h-5 w-[29px]">
          <Ic w={20} h={20}><path d="M1 6.5 Q8 6.5 18 1.5 V14.5 Q13 12 9 11 M1 6.5 V9.5 H5 L6.5 17 H10 L8.5 10.5 M6 7 V9.5" /></Ic>
          <span className="absolute top-[13px] left-[9px] h-3.5 w-5 rounded-full bg-[#346187] text-center text-[11px] leading-[14px] font-bold text-white">51</span>
        </div>
        <Ic w={24} h={20} className="ml-[16px]"><path d="M8 12.5 H6.5 L4.5 15.5 V12.5 H3 Q1.5 12.5 1.5 11 V3.5 Q1.5 2 3 2 H15.5 Q17 2 17 3.5 V5" /><path d="M11 6.5 H21 Q22.5 6.5 22.5 8 V13 Q22.5 14.5 21 14.5 H19.5 V17.8 L16 14.5 H11 Q9.5 14.5 9.5 13 V8 Q9.5 6.5 11 6.5 Z" /></Ic>
        <Ic w={20} h={20} className="ml-[26px]"><circle cx="10" cy="10" r="8.6" /><path d="M7.2 7.6 Q7.4 5.2 10 5.2 Q12.7 5.3 12.7 7.6 Q12.6 9.2 10 10.6 V12" strokeWidth="1.5" /><path d="M10 13.4 V15" strokeWidth="1.7" /></Ic>
      </div>
    </div>
  </header>
);

const Toolbar = () => (
  <div className="flex h-[63px] text-[#346187]">
    <div className="mt-5 ml-[11px] flex h-[26px] w-[93px] overflow-hidden rounded-[3px] border border-[#b5bcc3] bg-white text-sm leading-[25px]">
      <div className="w-[47px] bg-[#346187] text-center font-bold tracking-[-0.4px] text-white">Story</div>
      <div className="flex-1 text-center">Data</div>
    </div>
    <Sep className="ml-5" />
    <Ic w={12} h={8} sw={1.6} className="mt-[13px] ml-4"><path d="M1 6.5 L6 1.5 L11 6.5" /></Ic>
    <Group title="File" className="ml-[27px]" titleClass="tracking-[-0.1px]">
      <Ic><path d="M1.5 2.6 Q4.5 0.8 7 2.6 Q8.6 4.2 8 6.6 L15.5 14 Q15.8 16 13.8 16.2 L6.6 8.6 Q3.2 9.4 1.8 6.4 L3.4 6.6 L5 6.2 L5.2 4.2 L4.2 3 Z" /></Ic>
      <Chev className="ml-[5px]" />
      <Ic className="ml-[26px]"><path d="M2 3 Q2 1.8 3.2 1.8 H16 V16.3 H4 L2 14.5 Z M5.3 1.8 V7 H13 V1.8 M5.8 16.3 V10.5 H12.6 V16.3 M8.2 16 V12.8 H10.4 M2 9.8 H3" /></Ic>
      <Chev className="ml-[5px]" />
      <Ic className="ml-[26px]"><path d="M6.5 4 V1.5 H16 V13.5 H13" /><path d="M5.5 4.8 H12.8 V16.5 H2 V8.3 Z M5 5 V8.3 H2 M4.8 11 H10 M4.8 13.6 H10" /></Ic>
      <Chev className="ml-[5px]" />
      <Ic className="ml-[27px]"><circle cx="3.9" cy="9" r="2.5" /><circle cx="14" cy="3.7" r="2.5" /><circle cx="14" cy="14.3" r="2.5" /><path d="M6.1 7.8 L11.8 4.9 M6.1 10.2 L11.8 13.1" /></Ic>
      <Chev className="ml-[6px]" />
    </Group>
    <Sep className="ml-[15px]" />
    <Group title="Insert" className="ml-[17px]" titleClass="pl-px tracking-[-0.1px]">
      <Ic><path d="M2 1.5 V17" opacity="0.7" /><path d="M3 5 H8.5 M3 9.5 H12.5 M3 14 H16.5" strokeWidth="1.9" /></Ic>
      <Ic className="ml-[25px]"><path d="M1.8 3.2 Q1.8 2 3 2 H16 V16 H3 Q1.8 16 1.8 14.8 Z M1 6 H16 M1 9.3 H16 M1 12.6 H16 M5.3 1.5 V16.5 M9 1.5 V16.5 M12.5 1.5 V16.5" strokeWidth="0.95" /></Ic>
      <Ic className="ml-[25px]"><path d="M0.5 3.2 H5 M10 3.2 H17.5 M0.5 9 H9.5 M15 9 H17.5 M0.5 14.8 H4 M9 14.8 H17.5" opacity="0.85" /><path d="M6.4 2 H8.9 V4.5 H6.4 Z M10.8 7.8 H13.4 V10.3 H10.8 Z M5.2 13.5 H7.8 V16 H5.2 Z" /></Ic>
      <Ic className="ml-[26px]" sw={1.9}><path d="M2 9 H16 M9 2 V16" /></Ic>
      <Chev className="ml-[6px]" />
    </Group>
    <Sep className="ml-[16px]" />
    <Group title="Tools" className="ml-[17px]" titleClass="pl-px tracking-[-0.3px]">
      <Ic><path d="M2 2 H15.8 L11 8.5 V13 L7.7 16 V8.5 Z" /></Ic>
      <Ic className="ml-6"><path d="M11.5 2.2 Q8.8 1 7.8 4 L4.6 14.5 Q3.8 16.8 2 15.8 M5 6.3 H10.5" /><path d="M8.7 7.2 Q10.2 6.2 11 8 L13 12.6 Q13.8 13.8 15 12.8 M15.3 6.6 L8.3 13.4" /></Ic>
      <Ic className="ml-[23px]"><path d="M7.3 1.8 H10.3 V15 H7.3 Z" /><path d="M5 16.4 H13.2" strokeWidth="1.6" /><path d="M7 2.6 Q5 1.6 4 3.5 L2.2 9 M4 3.5 L6 9 M10.5 3 Q13.5 3 14 5.5 L12 11 M14 5.5 L15.8 11 M1.8 9 H6.5 Q4.2 11.6 1.8 9 M11.6 11 H16.2 Q14 13.8 11.6 11" strokeWidth="0.95" /></Ic>
      <Ic className="ml-[26px]" sw={1.3}><path d="M7 1.8 L2 4.3 L7 6.8 M10.5 3 H17 M10.5 5.8 H17 M15.5 1 L12 8 M1.2 12.4 H7.7 M1.2 15.4 H7.7 M11 10.6 L16 13.4 L11 16.2" /></Ic>
      <Ic className="ml-[25px] text-[#bdccdb]"><path d="M6.5 2.5 H2 V16 H15 V12 M6.3 12 L7.2 9 L14.2 2 L16 3.8 L9 11 Z" /></Ic>
      <Ic w={26} className="ml-[26px]"><path d="M1.8 5.6 H5 V9.4 H1.8 Z M9.8 12.5 Q9.8 10.5 8.4 8.6 Q7.2 2 12.2 1.4 Q17.2 2 16 8.6 Q14.6 10.5 14.6 12.5 Z M10.2 14.3 H14.2 M10.8 16.4 H13.6" strokeWidth="1.3" /><path d="M4.8 11.8 H7.6 V14.8 H4.8 Z M17.4 3.6 H25 V13 H17.4 V9 Z" fill="currentColor" stroke="none" /><path d="M18.8 8.5 V11.5 M21 7 V11.5 M18 5.6 H24 M23.2 7 V11.5" stroke="#eef3f8" strokeWidth="1" /></Ic>
      <Ic className="ml-[26px] text-[#bdccdb]"><path d="M9 3 V13 M6.5 4.5 L9 2 L11.5 4.5 M1.2 6 L9 13.5 L16.8 6 M1 9.5 V6 H4.5 M13.5 6 H17 V9.5 M6.8 13.5 H11.2 L9 16 Z" /></Ic>
      <Chev className="ml-[8px] text-[#bdccdb]" />
      <Ic className="ml-[23px] text-[#bdccdb]"><path d="M4 2 H15.5 L17 3.7 L15.5 5.4 H4 Z M13.5 8 H3 L1.2 9.8 L3 11.5 H13.5 Z M9 5.4 V8 M9 11.5 V17" /></Ic>
      <Ic className="ml-[25px] text-[#bdccdb]" sw={2}><path d="M3.5 15.5 L14 4.5 M5.5 3.5 H15 V13" /></Ic>
      <Ic w={20} className="ml-[25px] text-[#bdccdb]"><path d="M8.5 12.5 H1 V3 H11.5 M1 6.2 H9 M4.3 3 V12.5 M1 9.4 H8.5 M8 3 V7" /><path d="M11 8.3 H19 V15.8 H11 Z M12.4 8 V5 Q12.6 3 15 3 Q17.2 3 17.5 5 V8 M15 10.5 V13.5" strokeWidth="1.5" /></Ic>
      <Ic className="ml-[27px] text-[#bdccdb]"><path d="M1.5 15.5 L3 11.5 L11.5 2.3 L14 4.6 L5.5 14 Z M9.8 4.3 L12.2 6.6 M3 11.5 L5.5 14" /><path d="M11.5 11 L16.5 16 M16.5 11 L11.5 16" strokeWidth="1.5" /></Ic>
      <Ic className="ml-[26px] text-[#bdccdb]"><path d="M1 11.5 H5.5 V16.3 H1 Z M12.5 2 H17.2 V6.8 H12.5 Z M5.5 14 H8 Q9.5 14 9 12 V7 Q9 4.4 11 4.4 H12.5" /></Ic>
      <Chev className="ml-[7px] text-[#bdccdb]" />
    </Group>
    <Sep className="ml-[14px]" />
    <Group title="Data" className="ml-[17px]" titleClass="pl-px">
      <Ic w={20} className="text-[#bdccdb]"><path d="M8 14.5 Q1.5 14 1.5 11.5 V4 Q2 1.4 7.5 1.4 Q13.5 1.4 14 4 V6 M1.5 4 Q2 6.5 7.5 6.5 M1.5 8 Q2 10.3 8 10.4" /><path d="M9 7 H17 L19 9 V16.8 H9 Z M11.5 7 V10 H16 V7 M11.5 16.5 V13 H16.5 V16.5" /></Ic>
      <Ic className="ml-[26px]"><path d="M13.5 3.7 A7 6.6 0 1 0 15.5 9.5 M10.5 1 L14 3.7 L10.5 6" /></Ic>
      <Chev className="ml-[5px]" />
      <Ic className="ml-[26px]" sw={1.3}><path d="M6 1.8 Q3.6 1.8 3.8 4 V7 Q3.8 8.8 1.8 9 Q3.8 9.2 3.8 11 V14 Q3.6 16.2 6 16.2 M12 1.8 Q14.4 1.8 14.2 4 V7 Q14.2 8.8 16.2 9 Q14.2 9.2 14.2 11 V14 Q14.4 16.2 12 16.2" /></Ic>
      <Chev className="ml-[7px]" />
      <Ic className="ml-[25px]" sw={1.3}><path d="M1 2.5 H12.5 V11.5 H1 Z M6 6 H17.2 V15.5 H6 Z" /></Ic>
      <Ic className="ml-[27px] text-[#bdccdb]"><path d="M4.5 3.3 A7.2 7.2 0 1 1 2 7.5 M1.5 3 V7 H5.5 M9 5 V9.5 H13" /></Ic>
    </Group>
    <Sep className="ml-[19px]" />
    <Group title="Format" className="ml-[17px] w-[44px]" titleClass="tracking-[-0.2px]">
      <Ic className="-ml-px"><path d="M2.6 2 H14.6 V6.3 H2.6 Z M2.6 9 H6.3 V16 H2.6 Z M8.5 9.3 H15 M8.5 12.6 H15 M8.5 15.8 H15" strokeWidth="1.3" /></Ic>
    </Group>
    <Sep className="ml-[15px]" />
    <Group title="Display" className="ml-2" titleClass="pl-[9px] tracking-[-0.2px]">
      <div className="grid h-[30px] w-[37px] place-items-center rounded-[3px] bg-[#427cac] text-white">
        <Ic><path d="M6 13.5 Q1 12 1.2 7.3 Q1.5 1.5 9 1.4 Q16.5 1.5 16.8 7.3 Q16.5 13 9.5 13.2 L6.2 16.8 Z" /><path d="M4.8 7 H6.4 M8.2 7 H9.8 M11.6 7 H13.2" strokeWidth="1.6" /></Ic>
      </div>
      <Ic className="ml-4" sw={1.3}><path d="M2 1.8 H15.8 V16.2 H2 Z M2 9 H16" /></Ic>
    </Group>
    <div className="mt-[18px] mr-[34px] ml-auto flex h-7 text-sm leading-[29px]">
      <div className="w-[72px] rounded-[3px] border border-[#427cac] bg-[#346187] text-center leading-[27px] font-bold tracking-[-0.2px] text-white">Designer</div>
      <div className="ml-[17px] w-[52px]">Controls</div>
      <div className="ml-[27px] w-[30px]">View</div>
    </div>
  </div>
);

const StoryCanvas = () => (
  <main className="relative h-[1177px] flex-1 bg-white">
    <section className="relative h-[1159px] w-[1012px] border-t border-r border-b border-[#427cac]">
      <div className="h-[43px] pt-px pl-px">
        <div className="h-[25px] text-base leading-[30px] tracking-[-0.3px] text-black">Title</div>
        <div className="flex h-4 items-center">
          <span className="-mt-1 w-11 text-[11px] leading-3 tracking-[-0.3px] text-[#8a8a8a]">Subtitle</span>
          <span className="h-[15px] w-px bg-[#555]" />
          <Ic w={12} h={13} className="ml-[5px] text-[#555]"><path d="M6 0.5 L11.5 3.5 V9.5 L6 12.5 L0.5 9.5 V3.5 Z" fill="currentColor" stroke="none" /><circle cx="6" cy="6.5" r="2.6" stroke="#fff" strokeWidth="0.9" /><path d="M6 0 V2 M0 6.5 H2 M10 6.5 H12 M6 11 V13" stroke="#fff" strokeWidth="0.8" /></Ic>
        </div>
      </div>
      <WorldMap />
      <MapTools />
      <span className="absolute top-0 left-[498px] h-px w-[11px] bg-[#427cac]" />
      <span className="absolute -bottom-0.5 left-[498px] h-[3px] w-[11px] bg-[#427cac]" />
      <span className="absolute top-[574px] -right-0.5 h-[11px] w-[3px] bg-[#427cac]" />
      <span className="absolute -top-px -right-px h-[7px] w-[7px] border-t-2 border-r-2 border-[#427cac]" />
      <span className="absolute -right-0.5 -bottom-0.5 h-2 w-2 border-r-[3px] border-b-[3px] border-[#427cac]" />
    </section>
    <button className="absolute top-px left-[1014px] grid size-10 place-items-center rounded-full bg-white text-[#346187] shadow-[0_2px_5px_rgba(0,0,0,0.28)]">
      <Ic sw={1.2}><circle cx="3" cy="9" r="1.4" /><circle cx="9" cy="9" r="1.4" /><circle cx="15" cy="9" r="1.4" /></Ic>
    </button>
    <div className="mt-[6px] h-3 w-[1711px] bg-[#b1b1b1]" />
  </main>
);

const BuilderPanel = () => (
  <aside className="relative z-10 -mt-[41px] h-[1218px] w-[464px] bg-white text-[#346187] shadow-[0_0_9px_rgba(0,0,0,0.35)]">
    <div className="flex h-[41px] items-center bg-[#427cac] text-white">
      <Ic className="ml-[21px]"><path d="M2 4.5 L4.5 2 Q7.5 2.5 7 6 L16.5 14.5 Q16.5 17 14 16.5 L5.5 7.5 Q2 8 1.5 5 L4 5.5 L5 4.5 M16.5 1.5 L13.5 3 L9.8 6.8 M16.5 1.5 L15.5 4.5 L11.5 8.2 M6.5 9.8 L1.5 14.5 Q1.5 17 4 16.8 L8.8 12" /></Ic>
      <span className="ml-[21px] text-sm leading-5 font-medium tracking-[-0.1px]">Builder</span>
      <div className="ml-auto grid h-full w-[60px] place-items-center bg-[#346187]">
        <Ic className="mt-px" sw={1.25}><path d="M1.2 14 L6.2 9.8 L8.6 12 L4 16.6 Q1.2 17 1.2 14 Z M5 8.4 L10 13 L15 9.2 L8.2 3.4 Z M9.6 4.6 L13.8 8.2 M7.2 7 L11.2 10.8" /><path d="M8.8 3 L10.4 1.6 L16.2 8 L15 9.2 M16.4 9.5 L17 12.5" strokeWidth="1.6" /></Ic>
      </div>
    </div>
    <div className="flex h-[66px] items-center">
      <Ic w={14} h={10} sw={2} className="ml-[25px]"><path d="M1 2 L7 8 L13 2" /></Ic>
      <h2 className="ml-[8px] text-[22px] leading-7 tracking-[-0.15px] text-[#333]">Map Layers</h2>
    </div>
    <div className="pl-[50px] text-sm leading-[21px]">
      <h3 className="mt-[1px] h-5 font-bold tracking-[0.4px] text-[#333]">Content Layers</h3>
      <div className="mt-[9px] ml-1 h-5 text-xs leading-5">+ Add Layer</div>
      <h3 className="mt-[17px] h-5 font-bold tracking-[0.3px] text-[#333]">Base Layer</h3>
      <div className="mt-[5px] flex h-7 w-[388px] items-center border border-[#d9d9d9] bg-[#f7f7f7]">
        <Ic className="ml-[7px]" sw={1.2}><path d="M2.5 1.5 H15.5 Q17 3 16.5 5 V16.5 H2.5 Q1 15 1.8 13 V3 Z" /><path d="M4.5 6 V7 M4.5 9 V10 M4.5 12 V13 M6.5 6 H8.5 M6.5 12.7 H8.5" /><path d="M10 3.8 H12.2 V6 H10 Z" fill="currentColor" stroke="none" /><path d="M10.2 10.5 L13.8 14 M13.8 10.5 L10.2 14" strokeWidth="1.7" /></Ic>
        <Chev className="mt-1 ml-[3px]" />
        <div className="ml-[9px] h-5 w-[275px] bg-[#f3f3f3] pl-1 leading-[21px]">Basemap</div>
        <Ic w={14} h={10} sw={2.2} className="ml-[40px]"><path d="M1 1.5 L7 7.5 L13 1.5" /></Ic>
      </div>
      <h3 className="mt-[17px] h-5 font-bold tracking-[0.2px] text-[#333]">Filters</h3>
    </div>
    <div className="mt-[17px] ml-4 h-px w-[432px] bg-[#e5e5e5]" />
    <div className="flex h-[66px] items-center">
      <Ic w={10} h={14} sw={2} className="ml-[27px]"><path d="M2 1 L8 7 L2 13" /></Ic>
      <h2 className="ml-[10px] text-[22px] leading-7 tracking-[-0.35px] text-[#333]">Properties</h2>
    </div>
  </aside>
);

export default function App() {
  return (
    <div className="h-[1329px] w-[2555px] overflow-hidden bg-[#eef3f8] font-[Roboto,sans-serif]">
      <Header />
      <Toolbar />
      <div className="flex h-[41px]">
        <div className="ml-[21px] flex h-10 w-11 flex-col border-b-2 border-[#427cac] pt-[11px] text-sm leading-5 text-[#427cac]">Page 1</div>
      </div>
      <div className="flex">
        <StoryCanvas />
        <BuilderPanel />
      </div>
    </div>
  );
}
